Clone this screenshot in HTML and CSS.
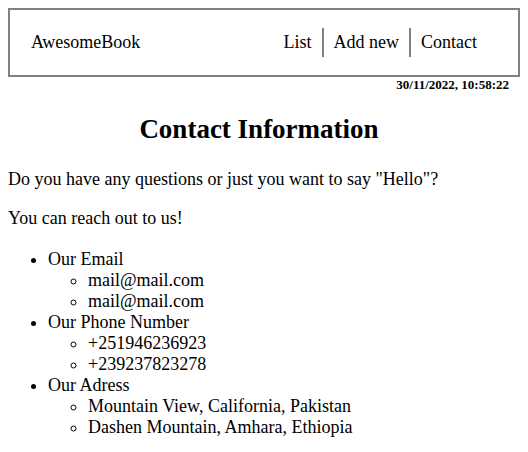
FILE: index.html
```html
<!DOCTYPE html>
<html lang="en">
<head>
<meta charset="utf-8">
<title>AwesomeBook</title>
<link rel="stylesheet" href="styles.css">
</head>
<body>
<header class="nav">
  <span class="logo">AwesomeBook</span>
  <ul class="menu">
    <li class="menu-item">List</li>
    <li class="menu-item">Add new</li>
    <li class="menu-item">Contact</li>
  </ul>
</header>
<p class="date">30/11/2022, 10:58:22</p>
<main class="contact">
  <h1 class="title">Contact Information</h1>
  <p class="text">Do you have any questions or just you want to say "Hello"?</p>
  <p class="text">You can reach out to us!</p>
  <ul class="info">
    <li>Our Email
      <ul class="sub">
        <li>mail@mail.com</li>
        <li>mail@mail.com</li>
      </ul>
    </li>
    <li>Our Phone Number
      <ul class="sub">
        <li>+251946236923</li>
        <li>+239237823278</li>
      </ul>
    </li>
    <li>Our Adress
      <ul class="sub">
        <li>Mountain View, California, Pakistan</li>
        <li>Dashen Mountain, Amhara, Ethiopia</li>
      </ul>
    </li>
  </ul>
</main>
</body>
</html>
```
FILE: styles.css
```css
body {
  margin: 8px;
  font-family: "Liberation Serif", "Times New Roman", serif;
  font-size: 18px;
  color: #000;
  background: #fff;
}

.nav {
  display: flex;
  justify-content: space-between;
  align-items: center;
  height: 65px;
  border: 2px solid #808080;
  padding: 0 31px 0 21px;
}

.logo {
  font-size: 18px;
}

.menu {
  display: flex;
  list-style: none;
  margin: 0;
  padding: 0;
}

.menu-item {
  padding: 4px 10px;
}

.menu-item + .menu-item {
  border-left: 2px solid #808080;
}

.date {
  margin: 0;
  padding-right: 11px;
  text-align: right;
  font-size: 13px;
  font-weight: bold;
}

.title {
  margin: 21px 0 24px;
  padding-right: 10px;
  text-align: center;
  font-size: 27px;
}

.text {
  margin: 18px 0;
}

.info {
  margin: 20px 0 18px;
  padding-left: 40px;
}

.sub {
  margin: 0;
  padding-left: 40px;
  list-style-type: circle;
}
```
